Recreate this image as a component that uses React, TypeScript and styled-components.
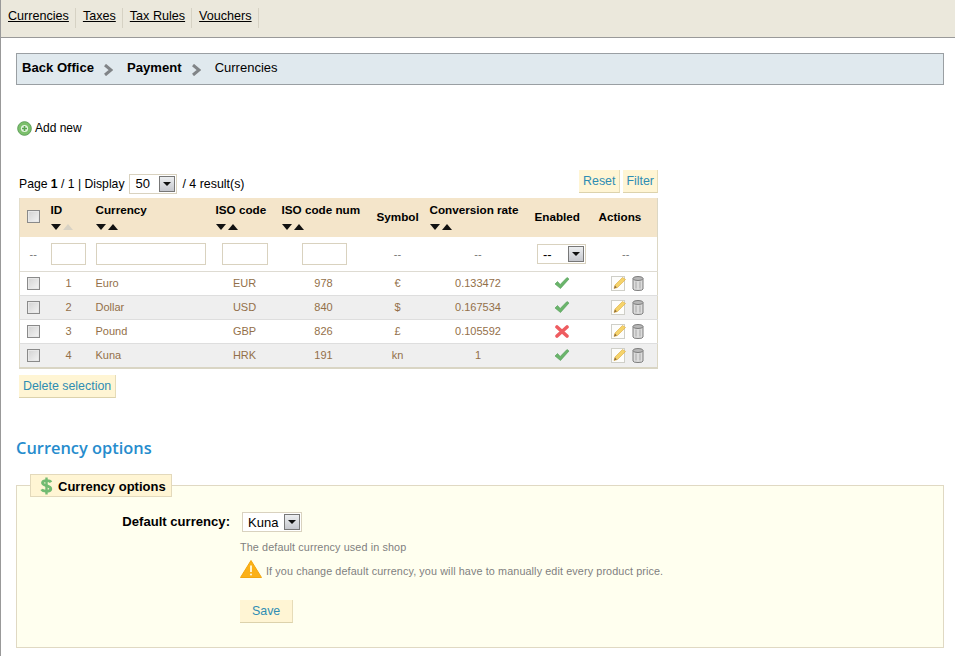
import React from "react";
import styled, { createGlobalStyle } from "styled-components";

const Global = createGlobalStyle`
  html, body { margin: 0; padding: 0; background: #fff; }
  body { font: 12px "Liberation Sans", Arial, sans-serif; color: #000; border-left: 1px solid #999; min-height: 656px; box-sizing: border-box; }
`;

const TopBar = styled.nav`
  display: flex; align-items: flex-start; height: 38px; padding: 8px 0 0 7px; box-sizing: border-box;
  background: #ebe8dc; border-bottom: 1px solid #999;
`;
const Tab = styled.a`
  display: block; height: 20px; line-height: 16px; padding: 0 6px 0 7px; color: #000; text-decoration: underline;
  border-right: 1px solid #d6d2c4; font-size: 12.6px;
  &:first-child { padding-left: 0; }
`;
const Main = styled.main`
  padding: 15px 11px 0 15px;
`;
const Crumbs = styled.div`
  display: flex; align-items: center; height: 30px; padding-left: 5px; background: #e0e9ee; border: 1px solid #9a9fa3;
  margin-bottom: 35px;
`;
const Crumb = styled.span<{ $bold?: boolean }>`
  font-weight: ${p => (p.$bold ? 700 : 400)}; font-size: ${p => (p.$bold ? 13.1 : 13)}px;
  margin-top: -3px; white-space: nowrap;
`;
const Chevron = styled.svg`
  width: 10px; height: 12px; margin: 2px 14px 0 9px;
`;
const AddNew = styled.a`
  display: flex; align-items: center; gap: 3px; margin: 0 0 36px 1px; height: 16px; font-size: 12px; color: #000;
`;
const ListArea = styled.section`
  width: 639px; margin-left: 3px;
`;
const Pager = styled.div`
  display: flex; align-items: center; justify-content: space-between; height: 26px;
`;
const PagerLeft = styled.div`
  display: flex; align-items: center; gap: 5px; margin-top: -3px; font-size: 12.4px;
`;
const PagerInfo = styled.span`
  font-size: 12.2px;
`;
const PagerRight = styled.div`
  display: flex; gap: 3px; margin-top: -8px;
`;
const Btn = styled.button<{ $px?: number }>`
  height: 23px; padding: 0 ${p => p.$px ?? 4}px; margin: 0; border: 0; border-right: 1px solid #e6dcb8; border-bottom: 1px solid #dcd2ac;
  background: #fff5d4; color: #2f8db3; font: 12.4px "Liberation Sans", Arial, sans-serif;
`;
const Sel = styled.span<{ $w: number }>`
  display: inline-flex; align-items: center; justify-content: space-between; box-sizing: border-box;
  width: ${p => p.$w}px; height: 20px; padding: 0 1px 0 5px; background: #fff; border: 1px solid #d9d2bf;
  font-size: 13px; color: #000;
`;
const SelArrow = styled.span`
  display: flex; align-items: center; justify-content: center; width: 16px; height: 16px; box-sizing: border-box;
  border: 1px solid #777; background: linear-gradient(#eceef0, #c6c8ce);
  &::after { content: ""; border: 4px solid transparent; border-top: 4px solid #111; border-bottom: 0; }
`;
const Table = styled.table`
  table-layout: fixed; width: 638px; border-collapse: collapse; border-left: 1px solid #e4decb; border-right: 1px solid #dcd7c4;
  border-bottom: 2px solid #d9d5c4; font-size: 11px; color: #936f49;
`;
const Th = styled.th`
  height: 37px; padding: 0 0 2px 4px; background: #f4e5ca; color: #000; font-size: 11.7px; font-weight: 700;
  text-align: left; vertical-align: middle; white-space: nowrap;
`;
const CheckTh = styled(Th)`
  padding-left: 0;
`;
const Sort = styled.div`
  display: flex; gap: 2px; margin-top: 8px; height: 6px;
`;
const Tri = styled.span<{ $up?: boolean; $off?: boolean }>`
  width: 0; height: 0; border-left: 5px solid transparent; border-right: 5px solid transparent;
  ${p => (p.$up ? "border-bottom" : "border-top")}: 6px solid ${p => (p.$off ? "#d8d2c4" : "#111")};
`;
const FilterCell = styled.td<{ $pad?: number; $shift?: number }>`
  height: 34px; padding: 0 ${p => p.$shift ?? 0}px 0 ${p => p.$pad ?? 0}px; border-bottom: 1px solid #dedbd2; color: #777;
  text-align: ${p => (p.$pad === undefined ? "center" : "left")};
`;
const FilterInput = styled.span<{ $w: number }>`
  display: block; box-sizing: border-box; width: ${p => p.$w}px; height: 22px; background: #fff; border: 1px solid #d9d2bf;
`;
const Row = styled.tr<{ $alt?: boolean }>`
  background: ${p => (p.$alt ? "#efefef" : "#fff")};
`;
const Td = styled.td<{ $left?: boolean; $shift?: number }>`
  height: 22px; padding: ${p => (p.$left ? "0 0 1px 4px" : `0 ${p.$shift ?? 0}px 1px 0`)}; border-bottom: 1px solid #dedede;
  text-align: ${p => (p.$left ? "left" : "center")}; white-space: nowrap;
  tr:last-child & { border-bottom: 0; }
`;
const CheckTd = styled(Td)`
  padding: 0 0 1px;
`;
const Check = styled.span`
  display: block; box-sizing: border-box; width: 13px; height: 13px; margin-left: 7px; border: 1px solid #8a8a8a;
  background: linear-gradient(135deg, #d2d2d2, #f4f4f4); box-shadow: inset 0 0 0 1px #e8e8e8;
`;
const ActionGroup = styled.span`
  display: inline-flex; align-items: center; gap: 6px; vertical-align: middle; margin: 1px 0 0 3px;
`;
const Status = styled.svg`
  display: inline-block; width: 16px; height: 14px; vertical-align: middle;
`;
const Below = styled.div`
  margin-top: 6px;
`;
const Heading = styled.h2`
  margin: 40px 0 16px; font: 600 16.4px/20px "Open Sans", sans-serif; color: #268ccd;
`;
const Fieldset = styled.fieldset`
  margin: 0; padding: 15px 0 0; height: 174px; box-sizing: border-box; background: #ffffef; border: 1px solid #e0d9c3;
`;
const Legend = styled.legend`
  display: flex; align-items: center; gap: 5px; box-sizing: border-box; height: 23px; width: 142px; margin-left: 13px; padding: 1px 0 0 9px;
  background: #fff5d4; border: 1px solid #e3d9bb; font-size: 13px; font-weight: 700; color: #000;
`;
const FormRow = styled.div`
  display: flex; align-items: center;
`;
const FormLabel = styled.label`
  width: 213px; margin-top: -2px; text-align: right; font-size: 13.1px; font-weight: 700; color: #000;
`;
const FormBody = styled.div`
  margin-left: 12px;
`;
const FormHelp = styled.div`
  margin-left: 223px;
`;
const Hint = styled.p`
  margin: 7px 0 0; font-size: 10.8px; line-height: 16px; color: #7f7f7f; letter-spacing: 0.11px;
`;
const Warn = styled.div`
  display: flex; align-items: center; gap: 4px; margin-top: 5px; height: 18px; font-size: 10.8px; color: #7f7f7f; letter-spacing: 0.11px;
`;
const WarnText = styled.span`
  margin-top: 3px;
`;
const SaveWrap = styled.div`
  margin-top: 22px;
`;

const Chev = () => (
  <Chevron viewBox="0 0 10 12"><path d="M2 1 L8 6 L2 11" fill="none" stroke="#808487" strokeWidth="3" /></Chevron>
);
const Plus = () => (
  <svg width="15" height="15" viewBox="0 0 15 15">
    <circle cx="7.5" cy="7.5" r="6.8" fill="#7cc06c" stroke="#5d9e58" />
    <circle cx="7.5" cy="7.5" r="3.6" fill="#e6f4e2" />
    <path d="M7.5 5v5M5 7.5h5" stroke="#5aa552" strokeWidth="1.6" />
  </svg>
);
const Yes = () => (
  <Status viewBox="0 0 16 14"><path d="M1 8 L3.5 5.5 L6.2 8.5 L13 1.5 L15 3 L6.5 12.5 Z" fill="#6ab56a" stroke="#4f9a55" strokeWidth="0.6" /></Status>
);
const No = () => (
  <Status viewBox="0 0 16 14"><path d="M3 3 L13 12M13 3 L3 12" stroke="#ee5c60" strokeWidth="3.6" strokeLinecap="round" /></Status>
);
const Edit = () => (
  <svg width="15" height="15" viewBox="0 0 15 15">
    <rect x="0.5" y="0.5" width="13" height="14" fill="#fdfdfb" stroke="#cfcfc8" />
    <path d="M3 12.5 L4 9 L11.5 1.5 L14.5 3.5 L6.5 11.5 Z" fill="#f5d36a" stroke="#dca93c" strokeWidth="0.6" />
    <path d="M3 12.5 L4 9.6 L5.8 11.4 Z" fill="#8a6a3c" />
  </svg>
);
const Trash = () => (
  <svg width="12" height="15" viewBox="0 0 12 15">
    <path d="M1 2.5 V13 Q1 14.5 6 14.5 Q11 14.5 11 13 V2.5" fill="#dcdcdc" stroke="#7c7c7c" />
    <ellipse cx="6" cy="2.5" rx="5" ry="2" fill="#b8b8b8" stroke="#7c7c7c" />
    <path d="M4 5.5v7M8 5.5v7" stroke="#a8a8a8" />
  </svg>
);
const SortPair = ({ off }: { off?: boolean }) => (
  <Sort><Tri /><Tri $up $off={off} /></Sort>
);
const Dollar = () => (
  <svg width="13" height="18" viewBox="0 0 13 18">
    <path d="M11 5.2 C10 3.4 3 2.8 2.5 5.8 C2 9 11 8.4 10.8 12 C10.5 15 3 14.8 1.6 12.4" fill="none" stroke="#72bb72" strokeWidth="2.8" />
    <path d="M6.5 0.5v17" stroke="#72bb72" strokeWidth="2.4" />
  </svg>
);
const Warning = () => (
  <svg width="22" height="18" viewBox="0 0 22 18">
    <path d="M11 0.5 L21.5 17.5 H0.5 Z" fill="#fbb117" stroke="#f2a60f" strokeLinejoin="round" />
    <path d="M11 5.5v6.5" stroke="#fff3cf" strokeWidth="2" />
    <circle cx="11" cy="14.5" r="1.1" fill="#fff3cf" />
  </svg>
);

const rows = [
  { id: 1, name: "Euro", iso: "EUR", num: "978", sym: "€", rate: "0.133472", on: true },
  { id: 2, name: "Dollar", iso: "USD", num: "840", sym: "$", rate: "0.167534", on: true },
  { id: 3, name: "Pound", iso: "GBP", num: "826", sym: "£", rate: "0.105592", on: false },
  { id: 4, name: "Kuna", iso: "HRK", num: "191", sym: "kn", rate: "1", on: true },
];
const widths = [27, 45, 120, 66, 95, 53, 105, 64, 63];

export default function App() {
  return (
    <>
      <Global />
      <TopBar>
        <Tab>Currencies</Tab><Tab>Taxes</Tab><Tab>Tax Rules</Tab><Tab>Vouchers</Tab>
      </TopBar>
      <Main>
        <Crumbs>
          <Crumb $bold>Back Office</Crumb><Chev />
          <Crumb $bold>Payment</Crumb><Chev />
          <Crumb>Currencies</Crumb>
        </Crumbs>
        <AddNew><Plus />Add new</AddNew>
        <ListArea>
          <Pager>
            <PagerLeft>
              <PagerInfo>Page <b>1</b> / 1 | Display</PagerInfo>
              <Sel $w={48}>50<SelArrow /></Sel>
              <span>/ 4 result(s)</span>
            </PagerLeft>
            <PagerRight><Btn>Reset</Btn><Btn $px={3}>Filter</Btn></PagerRight>
          </Pager>
          <Table>
            <colgroup>{widths.map((w, i) => <col key={i} width={w} />)}</colgroup>
            <thead>
              <tr>
                <CheckTh><Check /></CheckTh>
                <Th>ID<SortPair off /></Th>
                <Th>Currency<SortPair /></Th>
                <Th>ISO code<SortPair /></Th>
                <Th>ISO code num<SortPair /></Th>
                <Th>Symbol</Th>
                <Th>Conversion rate<SortPair /></Th>
                <Th>Enabled</Th>
                <Th>Actions</Th>
              </tr>
              <tr>
                <FilterCell>--</FilterCell>
                <FilterCell $pad={4}><FilterInput $w={35} /></FilterCell>
                <FilterCell $pad={4}><FilterInput $w={110} /></FilterCell>
                <FilterCell $pad={10}><FilterInput $w={46} /></FilterCell>
                <FilterCell $pad={24}><FilterInput $w={45} /></FilterCell>
                <FilterCell $shift={3}>--</FilterCell>
                <FilterCell>--</FilterCell>
                <FilterCell $shift={2}><Sel $w={49}>--<SelArrow /></Sel></FilterCell>
                <FilterCell>--</FilterCell>
              </tr>
            </thead>
            <tbody>
              {rows.map((r, i) => (
                <Row key={r.id} $alt={i % 2 === 1}>
                  <CheckTd><Check /></CheckTd>
                  <Td $shift={1}>{r.id}</Td>
                  <Td $left>{r.name}</Td>
                  <Td>{r.iso}</Td>
                  <Td $shift={3}>{r.num}</Td>
                  <Td $shift={3}>{r.sym}</Td>
                  <Td>{r.rate}</Td>
                  <Td $shift={2}>{r.on ? <Yes /> : <No />}</Td>
                  <Td><ActionGroup><Edit /><Trash /></ActionGroup></Td>
                </Row>
              ))}
            </tbody>
          </Table>
          <Below><Btn $px={4}>Delete selection</Btn></Below>
        </ListArea>
        <Heading>Currency options</Heading>
        <Fieldset>
          <Legend><Dollar />Currency options</Legend>
          <FormRow>
            <FormLabel>Default currency:</FormLabel>
            <FormBody><Sel $w={60}>Kuna<SelArrow /></Sel></FormBody>
          </FormRow>
          <FormHelp>
            <Hint>The default currency used in shop</Hint>
            <Warn><Warning /><WarnText>If you change default currency, you will have to manually edit every product price.</WarnText></Warn>
            <SaveWrap><Btn $px={12}>Save</Btn></SaveWrap>
          </FormHelp>
        </Fieldset>
      </Main>
    </>
  );
}
